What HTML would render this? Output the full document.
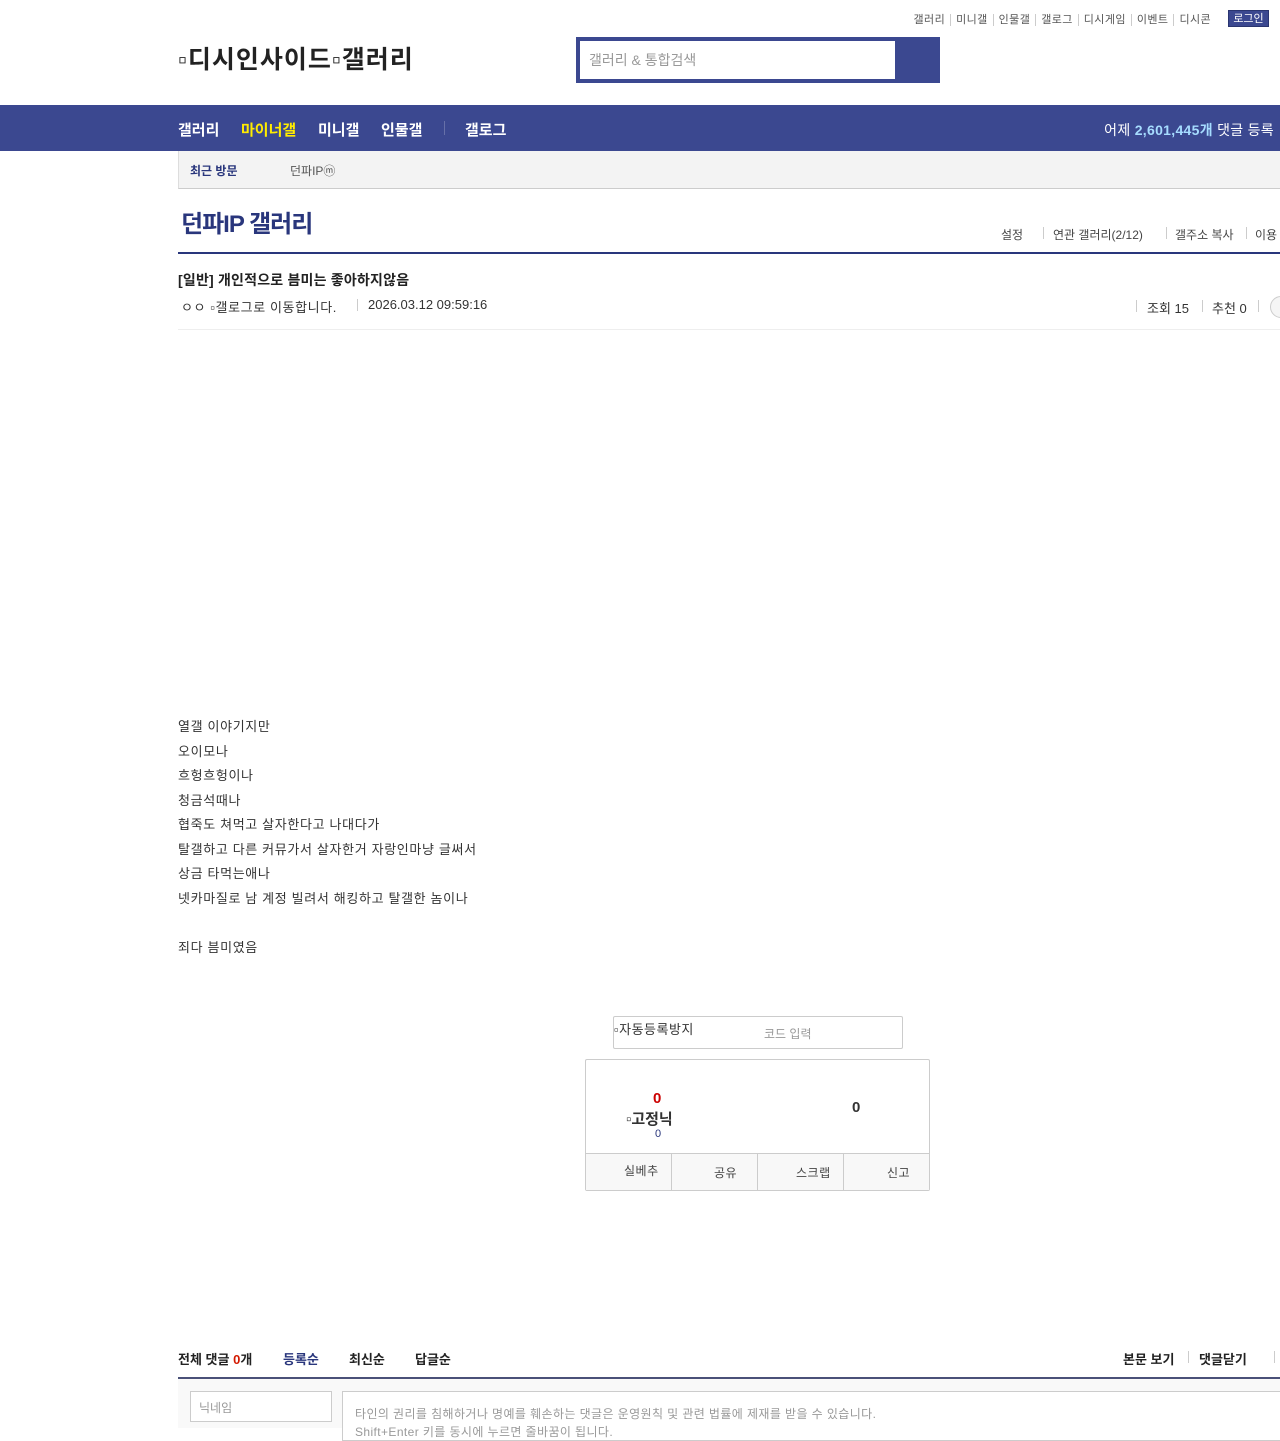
<!DOCTYPE html>
<html><head><meta charset="utf-8"><style>
*{margin:0;padding:0;box-sizing:border-box}
body{width:1280px;height:1428px;overflow:hidden;background:#fff;font-family:"Liberation Sans","Noto Sans CJK KR",sans-serif;color:#333;position:relative}
.a{position:absolute;white-space:nowrap}
.top{top:11px;font-size:11px;color:#555;right:64px;letter-spacing:0.4px}
.top span{padding:0 5px;border-left:1px solid #ccc}
.top span:first-child{border:0}
</style></head><body>
<div class="a top"><span>갤러리</span><span>미니갤</span><span>인물갤</span><span>갤로그</span><span>디시게임</span><span>이벤트</span><span>디시콘</span></div>
<div class="a" style="left:1228px;top:10px;width:41px;height:17px;background:#3b4890;color:#fff;font-size:11px;text-align:center;line-height:17px;border:1px solid #2a3570">로그인</div>
<div class="a" style="left:178px;top:40px;font-size:25px;font-weight:bold;color:#222;letter-spacing:1px">▫디시인사이드▫갤러리</div>
<div class="a" style="left:576px;top:37px;width:364px;height:46px;background:#3b4890"></div>
<div class="a" style="left:580px;top:41px;width:315px;height:38px;background:#fff;font-size:14px;color:#999;line-height:38px;padding-left:9px">갤러리 &amp; 통합검색</div>
<div class="a" style="left:0;top:105px;width:1280px;height:46px;background:#3b4890"></div>
<div class="a" style="left:178px;top:119px;font-size:15px;font-weight:bold;color:#fff">갤러리</div>
<div class="a" style="left:241px;top:119px;font-size:15px;font-weight:bold;color:#ffec00">마이너갤</div>
<div class="a" style="left:318px;top:119px;font-size:15px;font-weight:bold;color:#fff">미니갤</div>
<div class="a" style="left:381px;top:119px;font-size:15px;font-weight:bold;color:#fff">인물갤</div>
<div class="a" style="left:444px;top:121px;width:1px;height:14px;background:#6670a8"></div>
<div class="a" style="left:465px;top:119px;font-size:15px;font-weight:bold;color:#fff">갤로그</div>
<div class="a" style="right:6px;top:120px;font-size:14px;color:#fff;letter-spacing:0.3px">어제 <b style="color:#a6dcff">2,601,445개</b> 댓글 등록</div>
<div class="a" style="left:178px;top:151px;width:1102px;height:38px;background:#f3f3f3;border-left:1px solid #ddd;border-bottom:1px solid #ccc"></div>
<div class="a" style="left:190px;top:162px;font-size:12px;font-weight:bold;color:#29367c">최근 방문</div>
<div class="a" style="left:290px;top:162px;font-size:12px;color:#555">던파IPⓜ</div>
<div class="a" style="left:181px;top:204px;font-size:24px;font-weight:bold;color:#29367c;letter-spacing:-1px">던파IP 갤러리</div>
<div class="a" style="left:1001px;top:226px;font-size:12px;color:#444">설정</div>
<div class="a" style="left:1043px;top:227px;width:1px;height:12px;background:#ccc"></div>
<div class="a" style="left:1053px;top:226px;font-size:12px;color:#444">연관 갤러리(2/12)</div>
<div class="a" style="left:1166px;top:227px;width:1px;height:12px;background:#ccc"></div>
<div class="a" style="left:1175px;top:226px;font-size:12px;color:#444">갤주소 복사</div>
<div class="a" style="left:1246px;top:227px;width:1px;height:12px;background:#ccc"></div>
<div class="a" style="left:1255px;top:226px;font-size:12px;color:#444">이용</div>
<div class="a" style="left:178px;top:252px;width:1102px;height:2px;background:#29367c"></div>
<div class="a" style="left:178px;top:270px;font-size:14px;font-weight:bold;color:#222;letter-spacing:0.2px">[일반] 개인적으로 븜미는 좋아하지않음</div>
<div class="a" style="left:181px;top:297px;font-size:13px;color:#333;letter-spacing:0.6px">ㅇㅇ ▫갤로그로 이동합니다.</div>
<div class="a" style="left:357px;top:299px;width:1px;height:12px;background:#ccc"></div>
<div class="a" style="left:368px;top:297px;font-size:13px;color:#333">2026.03.12 09:59:16</div>
<div class="a" style="left:1136px;top:300px;width:1px;height:12px;background:#ccc"></div>
<div class="a" style="left:1147px;top:298px;font-size:13px;color:#333">조회 15</div>
<div class="a" style="left:1202px;top:300px;width:1px;height:12px;background:#ccc"></div>
<div class="a" style="left:1212px;top:298px;font-size:13px;color:#333">추천 0</div>
<div class="a" style="left:1258px;top:300px;width:1px;height:12px;background:#ccc"></div>
<div class="a" style="left:1270px;top:296px;width:22px;height:22px;border:1px solid #ccc;border-radius:50%;background:#f5f5f5"></div>
<div class="a" style="left:178px;top:329px;width:1102px;height:1px;background:#eee"></div>
<div class="a" style="left:178px;top:715px;font-size:13px;line-height:24.5px;color:#333;letter-spacing:0.65px">열갤 이야기지만<br>오이모나<br>흐헝흐헝이나<br>청금석때나<br>협죽도 쳐먹고 살자한다고 나대다가<br>탈갤하고 다른 커뮤가서 살자한거 자랑인마냥 글써서<br>상금 타먹는애나<br>넷카마질로 남 계정 빌려서 해킹하고 탈갤한 놈이나<br><br>죄다 븜미였음</div>
<div class="a" style="left:613px;top:1016px;width:290px;height:33px;border:1px solid #ccc;border-radius:2px"></div>
<div class="a" style="left:614px;top:1019px;font-size:13px;color:#333;letter-spacing:0.5px">▫자동등록방지</div>
<div class="a" style="left:764px;top:1025px;font-size:12px;color:#999">코드 입력</div>
<div class="a" style="left:585px;top:1059px;width:345px;height:132px;border:1px solid #ccc;border-radius:2px"></div>
<div class="a" style="left:653px;top:1090px;font-size:15px;font-weight:bold;color:#c00">0</div>
<div class="a" style="left:626px;top:1108px;font-size:15px;font-weight:bold;color:#333">▫고정닉</div>
<div class="a" style="left:655px;top:1128px;font-size:11px;color:#29367c">0</div>
<div class="a" style="left:852px;top:1099px;font-size:15px;font-weight:bold;color:#333">0</div>
<div class="a" style="left:586px;top:1153px;width:343px;height:37px;background:#f8f8f8;border-top:1px solid #ccc;font-size:12px;color:#444;letter-spacing:0.5px">
<div class="a" style="left:0;top:0;width:86px;height:36px;border-right:1px solid #ccc;line-height:34px;padding-left:38px">실베추</div>
<div class="a" style="left:86px;top:0;width:86px;height:36px;border-right:1px solid #ccc;line-height:38px;padding-left:42px">공유</div>
<div class="a" style="left:172px;top:0;width:86px;height:36px;border-right:1px solid #ccc;line-height:38px;padding-left:38px">스크랩</div>
<div class="a" style="left:258px;top:0;width:85px;height:36px;line-height:38px;padding-left:43px">신고</div></div>
<div class="a" style="left:178px;top:1349px;font-size:13px;font-weight:bold;color:#222">전체 댓글 <span style="color:#d31900">0</span>개</div>
<div class="a" style="left:283px;top:1349px;font-size:13px;font-weight:bold;color:#29367c">등록순</div>
<div class="a" style="left:349px;top:1349px;font-size:13px;font-weight:bold;color:#222">최신순</div>
<div class="a" style="left:415px;top:1349px;font-size:13px;font-weight:bold;color:#222">답글순</div>
<div class="a" style="left:1123px;top:1349px;font-size:13px;font-weight:bold;color:#222">본문 보기</div>
<div class="a" style="left:1188px;top:1351px;width:1px;height:12px;background:#ccc"></div>
<div class="a" style="left:1199px;top:1349px;font-size:13px;font-weight:bold;color:#222">댓글닫기</div>
<div class="a" style="left:1274px;top:1351px;width:1px;height:12px;background:#ccc"></div>
<div class="a" style="left:178px;top:1377px;width:1102px;height:2px;background:#4a5178"></div>
<div class="a" style="left:178px;top:1379px;width:1102px;height:49px;background:#f9f9f9"></div>
<div class="a" style="left:190px;top:1391px;width:142px;height:31px;border:1px solid #ccc;background:#fff;font-size:12px;color:#999;padding:7px 8px">닉네임</div>
<div class="a" style="left:342px;top:1391px;width:950px;height:50px;border:1px solid #ccc;background:#fff;font-size:12px;color:#999;padding:13px 12px;line-height:18px;letter-spacing:0.4px">타인의 권리를 침해하거나 명예를 훼손하는 댓글은 운영원칙 및 관련 법률에 제재를 받을 수 있습니다.<br>Shift+Enter 키를 동시에 누르면 줄바꿈이 됩니다.</div>
</body></html>
